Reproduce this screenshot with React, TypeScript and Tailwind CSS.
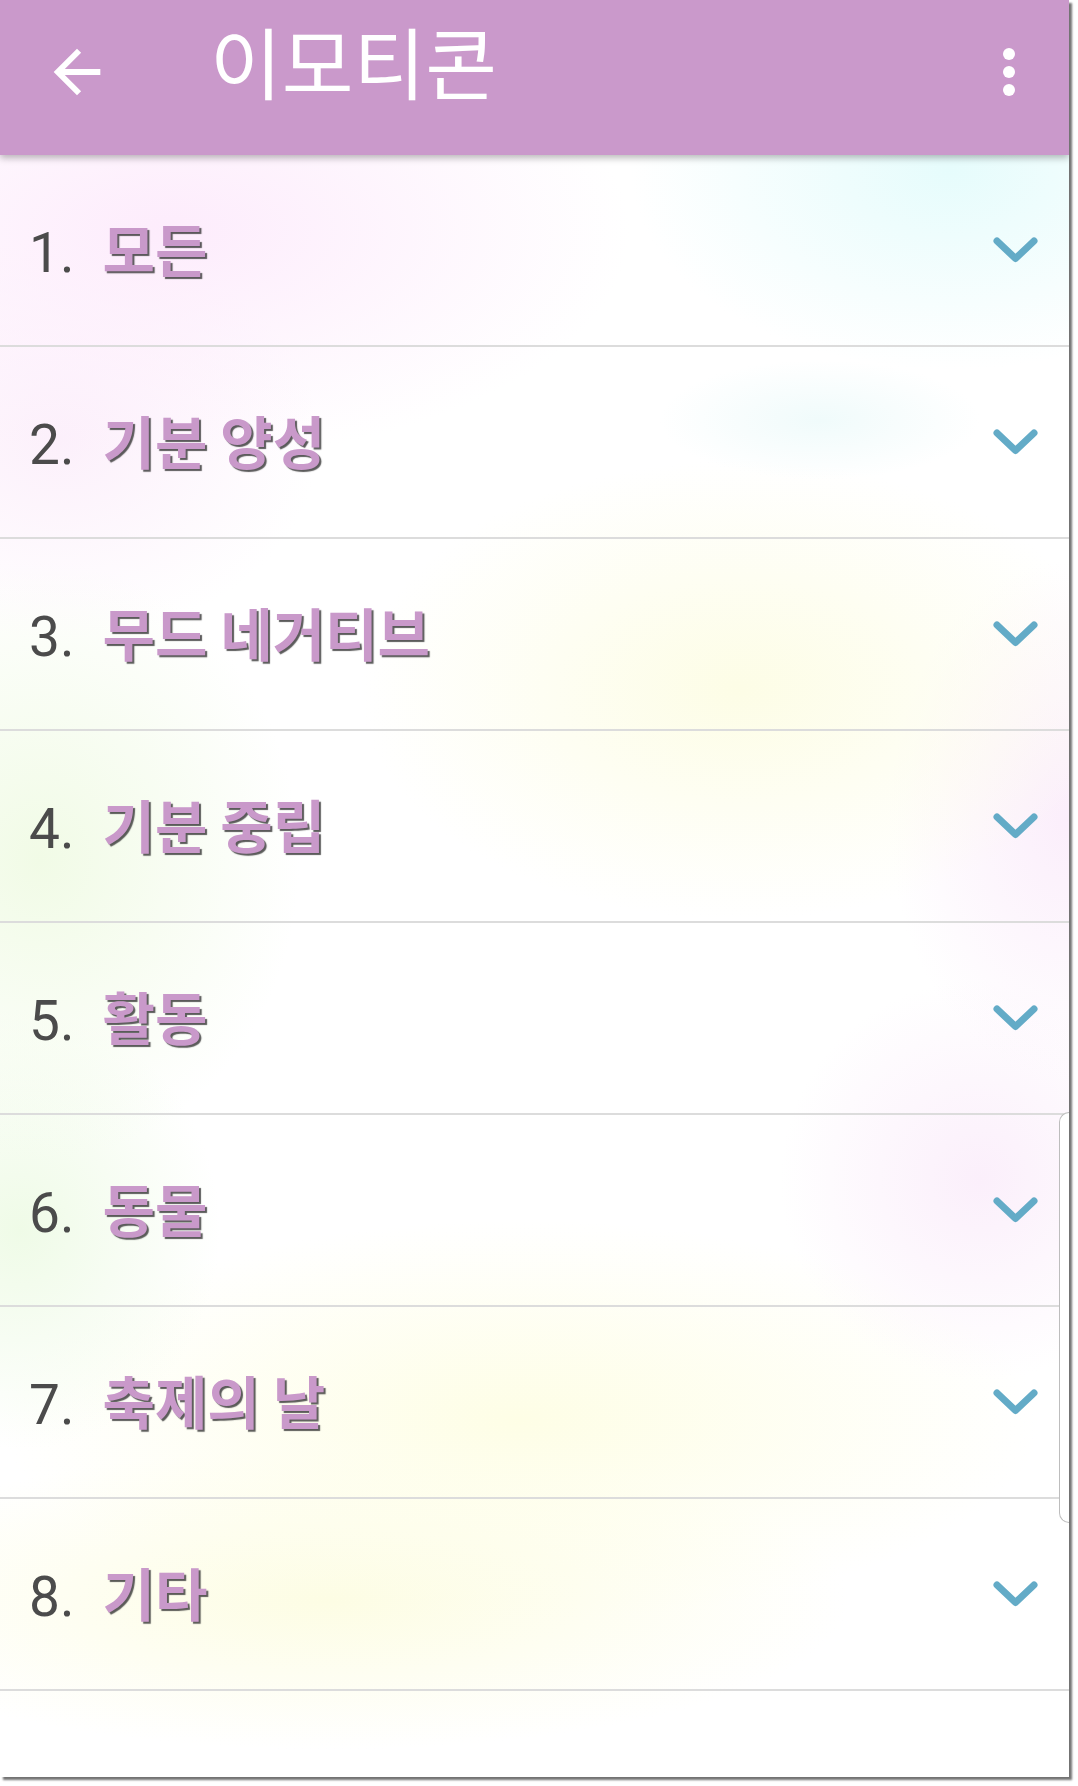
import React from "react";

// Emoticon category list (8 entries)
const categories = [
    "모든",
    "기분 양성",
    "무드 네거티브",
    "기분 중립",
    "활동",
    "동물",
    "축제의 날",
    "기타",
];

const Chevron = () => (
    <svg width="45" height="27" viewBox="0 0 45 27" fill="none">
        <path
            d="M4 4 L22.5 21.5 L41 4"
            stroke="#63abc7"
            strokeWidth="7"
            strokeLinecap="round"
            strokeLinejoin="round"
        />
    </svg>
);

const BackArrow = () => (
    <svg width="70" height="70" viewBox="0 0 24 24" fill="#ffffff">
        <path d="M20 11H7.83l5.59-5.59L12 4l-8 8 8 8 1.41-1.41L7.83 13H20v-2z" />
    </svg>
);

export default function App() {
    return (
        <div className="w-[1078px] h-[1786px] bg-white">
            <div className="relative w-[1069px] h-[1777px] overflow-hidden bg-white shadow-[3px_3px_2px_rgba(0,0,0,0.55)] bg-[image:radial-gradient(ellipse_460px_230px_at_170px_230px,#fdecfc,rgba(255,255,255,0)),radial-gradient(ellipse_320px_200px_at_950px_170px,#e6fcfc,rgba(255,255,255,0)),radial-gradient(ellipse_260px_200px_at_60px_440px,#fcf0fb,rgba(255,255,255,0)),radial-gradient(ellipse_160px_60px_at_820px_420px,#f0fbfb,rgba(255,255,255,0)),radial-gradient(ellipse_380px_230px_at_740px_690px,#fdfde6,rgba(255,255,255,0)),radial-gradient(ellipse_180px_260px_at_1069px_820px,#fbeefb,rgba(255,255,255,0)),radial-gradient(ellipse_260px_300px_at_40px_860px,#f1fbe6,rgba(255,255,255,0)),radial-gradient(ellipse_200px_200px_at_980px_1180px,#fbeffb,rgba(255,255,255,0)),radial-gradient(ellipse_200px_220px_at_20px_1230px,#effbe7,rgba(255,255,255,0)),radial-gradient(ellipse_520px_200px_at_520px_1420px,#fefee6,rgba(255,255,255,0)),radial-gradient(ellipse_520px_150px_at_330px_1600px,#fdfde4,rgba(255,255,255,0))]">
                {/* App bar */}
                <header className="relative z-10 h-[155px] bg-[#ca99cb] flex items-center shadow-[0_3px_7px_rgba(0,0,0,0.28)]">
                    <div className="ml-[42px] mt-[-12px]">
                        <BackArrow />
                    </div>
                    <h1 className="ml-[98px] mt-[-36px] text-white text-[78px] leading-none font-['Noto_Sans_CJK_KR',sans-serif]">
                        이모티콘
                    </h1>
                    <div className="ml-auto mr-[54px] mt-[-12px] flex flex-col gap-[6px]">
                        <span className="block w-3 h-3 rounded-full bg-white" />
                        <span className="block w-3 h-3 rounded-full bg-white" />
                        <span className="block w-3 h-3 rounded-full bg-white" />
                    </div>
                </header>

                {/* Category list */}
                <ul>
                    {categories.map((name, i) => (
                        <li
                            key={name}
                            className="h-[192px] border-b-2 border-[#dcdcdc] flex items-center pl-[29px] pr-[31px]"
                        >
                            <div className="flex items-baseline">
                                <span className="text-[55px] text-[#4b4b4b] font-['Roboto',sans-serif]">
                                    {i + 1}.
                                </span>
                                <span className="ml-[28px] text-[57px] font-bold text-[#c999ca] font-['Noto_Sans_CJK_KR',sans-serif] [text-shadow:2px_2px_1px_rgba(50,50,50,0.8)]">
                                    {name}
                                </span>
                            </div>
                            <div className="ml-auto">
                                <Chevron />
                            </div>
                        </li>
                    ))}
                </ul>

                {/* scrollbar thumb on the right edge */}
                <div className="absolute right-0 top-[1112px] w-[10px] h-[411px] rounded-l-[10px] border border-r-0 border-[#bdbdbd] bg-white" />
            </div>
        </div>
    );
}
